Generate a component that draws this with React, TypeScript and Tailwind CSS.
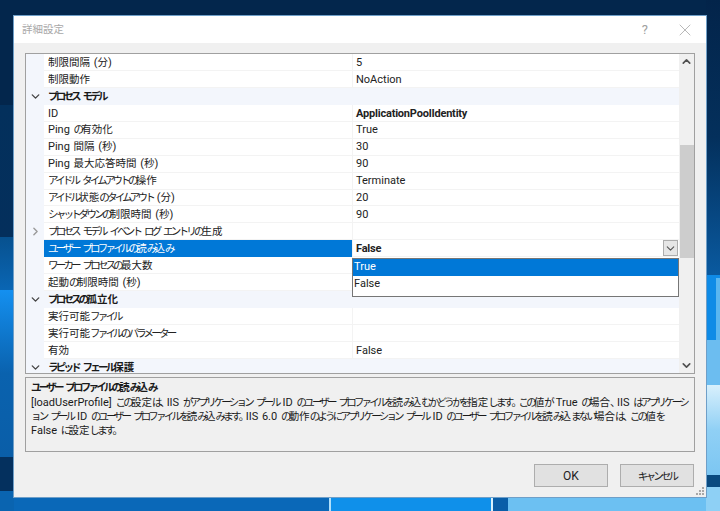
import { ChevronDown, ChevronRight, ChevronUp, X } from "lucide-react"

const FONT = "font-['Roboto','Noto_Sans_CJK_JP',sans-serif] [word-spacing:1px]"

type Row =
  | { kind: "group"; name: string }
  | { kind: "prop"; name: string; value?: string; bold?: boolean; selected?: boolean; more?: boolean }

const rows: Row[] = [
  { kind: "prop", name: "制限間隔 (分)", value: "5" },
  { kind: "prop", name: "制限動作", value: "NoAction" },
  { kind: "group", name: "プロセス モデル" },
  { kind: "prop", name: "ID", value: "ApplicationPoolIdentity", bold: true },
  { kind: "prop", name: "Ping の有効化", value: "True" },
  { kind: "prop", name: "Ping 間隔 (秒)", value: "30" },
  { kind: "prop", name: "Ping 最大応答時間 (秒)", value: "90" },
  { kind: "prop", name: "アイドル タイムアウトの操作", value: "Terminate" },
  { kind: "prop", name: "アイドル状態のタイムアウト (分)", value: "20" },
  { kind: "prop", name: "シャットダウンの制限時間 (秒)", value: "90" },
  { kind: "prop", name: "プロセス モデル イベント ログ エントリの生成", more: true },
  { kind: "prop", name: "ユーザー プロファイルの読み込み", value: "False", bold: true, selected: true },
  { kind: "prop", name: "ワーカー プロセスの最大数" },
  { kind: "prop", name: "起動の制限時間 (秒)" },
  { kind: "group", name: "プロセスの孤立化" },
  { kind: "prop", name: "実行可能ファイル" },
  { kind: "prop", name: "実行可能ファイルのパラメーター" },
  { kind: "prop", name: "有効", value: "False" },
  { kind: "group", name: "ラピッド フェール保護" },
]

// the screenshot's Japanese font has much narrower kana than Noto, so squeeze the runs
function Ja({ children }: { children: string }) {
  const parts = children.split(/([\u3041-\u30ff]+|[\u3001\u3002]+|[\u4e00-\u9fff]+)/).filter(Boolean)
  return (
    <>
      {parts.map((part, i) => {
        if (/^[\u3041-\u30ff]/.test(part)) return <span key={i} className="text-[10.5px] tracking-[-2.8px]">{part}</span>
        if (/^[\u3001\u3002]/.test(part)) return <span key={i} className="text-[10.5px] tracking-[-3.5px]">{part}</span>
        if (/^[\u4e00-\u9fff]/.test(part)) return <span key={i} className="text-[10.5px]">{part}</span>
        return <span key={i}>{part}</span>
      })}
    </>
  )
}

function Wallpaper() {
  return (
    <div className="absolute inset-0 bg-[#03264c]">
      {/* left edge */}
      <div className="absolute left-0 top-[105px] h-[132px] w-[14px] bg-gradient-to-b from-[#03305c] to-[#042f5c]" />
      <div className="absolute left-0 top-[237px] h-[53px] w-[14px] bg-gradient-to-b from-[#07518f] to-[#0a66b4]" />
      <div className="absolute left-0 top-[290px] h-[167px] w-[14px] bg-gradient-to-b from-[#1490f0] via-[#0a62ae] to-[#0a5ea8]" />
      <div className="absolute left-0 top-[457px] h-[34px] w-[14px] bg-[#04305e]" />
      <div className="absolute left-0 top-[491px] h-[20px] w-[14px] bg-[#0a64b0]" />
      {/* right edge */}
      <div className="absolute right-0 top-0 h-[275px] w-[14px] bg-gradient-to-b from-[#03244a] via-[#04305c] to-[#0a5aa0]" />
      <div className="absolute right-0 top-[275px] h-[65px] w-[14px] bg-[#0f8be6]" />
      <div className="absolute left-[716px] top-[278px] h-[62px] w-[4px] bg-[#5ab6f0]" />
      <div className="absolute right-0 top-[340px] h-[45px] w-[14px] bg-[#6cbdf0]" />
      <div className="absolute right-0 top-[385px] h-[90px] w-[14px] bg-gradient-to-b from-[#d8f0fc] via-[#90d0f5] to-[#7cc6f2]" />
      <div className="absolute right-0 top-[475px] h-[12px] w-[14px] bg-[#0a4a80]" />
      <div className="absolute right-0 top-[487px] h-[24px] w-[14px] bg-[#8ed0f5]" />
      {/* bottom edge */}
      <div className="absolute bottom-0 left-[14px] h-[14px] w-[315px] bg-[#0a68b8]" />
      <div className="absolute bottom-0 left-[329px] h-[14px] w-[2px] bg-[#b0e0fa]" />
      <div className="absolute bottom-0 left-[331px] h-[14px] w-[160px] bg-[#0f90ea]" />
      <div className="absolute bottom-0 left-[491px] h-[14px] w-[2px] bg-[#d8f0fc]" />
      <div className="absolute bottom-0 left-[493px] h-[14px] w-[15px] bg-[#0a5ea8]" />
      <div className="absolute bottom-0 left-[508px] h-[14px] w-[198px] bg-[#6cc0f2]" />
    </div>
  )
}

function GridRow({ row }: { row: Row }) {
  if (row.kind === "group") {
    return (
      <div className="flex h-[16.94px] items-center bg-[#f3f6fc] text-[11px] font-bold text-[#1a1a1a]">
        <div className="flex w-[18px] flex-none justify-center text-[#444]">
          <ChevronDown className="h-[13px] w-[13px]" strokeWidth={2.5} />
        </div>
        <span className="whitespace-nowrap pl-[4px] pt-[2px]"><Ja>{row.name}</Ja></span>
      </div>
    )
  }
  return (
    <div className="flex h-[16.94px] text-[11px] text-[#222]">
      <div className="flex w-[18px] flex-none items-center justify-center bg-[#f3f6fc] text-[#999]">
        {row.more && <ChevronRight className="h-[13px] w-[13px]" strokeWidth={2.5} />}
      </div>
      <div
        className={`flex w-[308px] flex-none items-center whitespace-nowrap border-b pl-[4px] pt-[2px] ${
          row.selected ? "border-[#0078d7] bg-[#0078d7] text-white" : "border-[#f3f3f3]"
        }`}
      >
        <span><Ja>{row.name}</Ja></span>
      </div>
      <div
        className={`relative flex min-w-0 flex-1 items-center border-b border-l border-[#f3f3f3] pl-[3px] pt-[2px] ${
          row.bold ? "font-bold tracking-[-0.2px]" : ""
        }`}
      >
        {row.value}
        {row.selected && (
          <div className="absolute right-[1px] top-0 flex h-[16px] w-[15px] items-center justify-center border border-[#adadad] bg-[#e6e6e6] text-[#555]">
            <ChevronDown className="h-[13px] w-[13px]" strokeWidth={2} />
          </div>
        )}
      </div>
    </div>
  )
}

function Dialog() {
  return (
    <div className={`relative flex h-[481px] w-[692px] flex-col bg-[#f0f0f0] shadow-[0_0_0_1px_#6f9fc8] ${FONT}`}>
      {/* Title bar */}
      <div className="flex h-[27px] flex-none items-center justify-between bg-white pl-[8px] pr-[11px]">
        <span className="pt-[2px] text-[11px] text-[#a8a8a8]"><Ja>詳細設定</Ja></span>
        <div className="flex items-center gap-[27px] text-[#a0a0a0]">
          <span className="text-[13px] leading-none">?</span>
          <X className="h-5 w-5" strokeWidth={0.9} />
        </div>
      </div>

      <div className="flex min-h-0 flex-1 flex-col px-[11px] pt-[10px]">
        {/* Property grid */}
        <div className="relative flex h-[321px] flex-none overflow-hidden border border-[#a0a0a0] bg-white">
          <div className="min-w-0 flex-1 overflow-hidden">
            {rows.map((row, i) => (
              <GridRow key={i} row={row} />
            ))}
          </div>
          <div className="flex w-[15px] flex-none flex-col items-center justify-between bg-[#f0f0f0] text-[#505050]">
            <ChevronUp className="mt-[1px] h-[13px] w-[13px]" strokeWidth={3} />
            <div className="absolute right-0 top-[91px] h-[113px] w-[14px] bg-[#cdcdcd]" />
            <ChevronDown className="mb-[1px] h-[13px] w-[13px]" strokeWidth={3} />
          </div>

          {/* Open dropdown */}
          <div className="absolute left-[326px] top-[204px] z-10 h-[39px] w-[327px] border border-[#767676] bg-white text-[11px]">
            <div className="flex h-[17px] items-center bg-[#0078d7] pl-[1px] text-white">True</div>
            <div className="flex h-[16px] items-center pl-[1px] text-[#222]">False</div>
          </div>
        </div>

        {/* Description */}
        <div className="mt-[3px] h-[75px] flex-none border border-[#a0a0a0] px-[5px] text-[#1a1a1a]">
          <p className="pt-[1px] text-[11px] font-bold leading-[17px]"><Ja>ユーザー プロファイルの読み込み</Ja></p>
          <p className="whitespace-nowrap text-[11px] leading-[14px]">
            <Ja>[loadUserProfile] この設定は、IIS がアプリケーション プール ID のユーザー プロファイルを読み込むかどうかを指定します。この値が True の場合、IIS はアプリケーシ</Ja>
            <br />
            <Ja>ョン プール ID のユーザー プロファイルを読み込みます。IIS 6.0 の動作のようにアプリケーション プール ID のユーザー プロファイルを読み込まない場合は、この値を</Ja>
            <br />
            <Ja>False に設定します。</Ja>
          </p>
        </div>

        {/* Buttons */}
        <div className="mt-[12px] flex justify-end gap-[12px] pr-[1px]">
          <button className="h-[23px] w-[74px] border border-[#adadad] bg-[#e1e1e1] text-[12px] text-[#222]">OK</button>
          <button className="h-[23px] w-[74px] border border-[#adadad] bg-[#e1e1e1] text-[12px] text-[#222]"><Ja>キャンセル</Ja></button>
        </div>
      </div>

      {/* Resize grip */}
      <svg className="absolute bottom-[1px] right-[1px] h-[10px] w-[10px]" viewBox="0 0 10 10" fill="#a8a8a8">
        <rect x="7" y="1" width="2" height="2" />
        <rect x="4" y="4" width="2" height="2" />
        <rect x="7" y="4" width="2" height="2" />
        <rect x="1" y="7" width="2" height="2" />
        <rect x="4" y="7" width="2" height="2" />
        <rect x="7" y="7" width="2" height="2" />
      </svg>
    </div>
  )
}

export default function App() {
  return (
    <div className="relative h-[511px] w-[720px] overflow-hidden">
      <Wallpaper />
      <div className="absolute left-[14px] top-[16px]">
        <Dialog />
      </div>
    </div>
  )
}
